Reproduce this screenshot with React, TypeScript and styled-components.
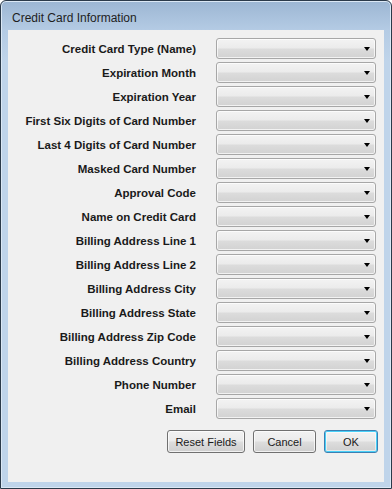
import * as React from "react";
import styled, { createGlobalStyle } from "styled-components";

const GlobalStyle = createGlobalStyle`
  html, body {
    margin: 0;
    padding: 0;
    background: #ffffff;
  }
`;

// Window frame
const Window = styled.div`
  box-sizing: border-box;
  width: 392px;
  height: 489px;
  display: flex;
  flex-direction: column;
  border: 1px solid #2b3a4a;
  border-radius: 6px 6px 0 0;
  background: linear-gradient(
    to bottom,
    #9cb6d3 0px,
    #b4cbe4 29px,
    #bfd4ea 60px,
    #bfd4ea 100%
  );
  box-shadow: inset 0 0 0 1px #dbe8f5;
  padding: 0 7px 6px 7px;
`;

const TitleBar = styled.div`
  height: 29px;
  display: flex;
  align-items: center;
  padding: 5px 0 0 4px;
  box-sizing: border-box;
  font-family: "Liberation Sans", Arial, sans-serif;
  font-size: 12px;
  color: #1e1e1e;
`;

const Client = styled.div`
  flex: 1;
  display: flex;
  flex-direction: column;
  background: #f0f0f0;
  padding: 8px 0 0 0;
`;

// Form grid
const Form = styled.div`
  display: grid;
  grid-template-columns: 188px 160px;
  column-gap: 20px;
  row-gap: 3px;
`;

const Label = styled.label`
  display: flex;
  align-items: center;
  justify-content: flex-end;
  height: 21px;
  font-family: "Liberation Sans", Arial, sans-serif;
  font-weight: bold;
  font-size: 11.5px;
  color: #1a1a1a;
  white-space: nowrap;
`;

const Select = styled.div`
  position: relative;
  box-sizing: border-box;
  height: 21px;
  border: 1px solid #a7a7a7;
  border-radius: 3px;
  background: linear-gradient(
    to bottom,
    #f3f3f3 0%,
    #ebebeb 48%,
    #dcdcdc 52%,
    #d2d2d2 100%
  );
  box-shadow: inset 0 0 0 1px rgba(255, 255, 255, 0.7);
`;

const Arrow = styled.span`
  position: absolute;
  right: 5px;
  top: 8px;
  width: 0;
  height: 0;
  border-left: 3.5px solid transparent;
  border-right: 3.5px solid transparent;
  border-top: 4px solid #000000;
`;

// Button row
const ButtonRow = styled.div`
  display: flex;
  justify-content: flex-end;
  gap: 8px;
  margin-top: 11px;
  padding-right: 6px;
`;

const Button = styled.button<{ $width: number; $default?: boolean }>`
  box-sizing: border-box;
  width: ${(p) => p.$width}px;
  height: 23px;
  padding: 0;
  border: 1px solid ${(p) => (p.$default ? "#3c7fb1" : "#707070")};
  border-radius: 3px;
  background: linear-gradient(
    to bottom,
    #f2f2f2 0%,
    #ebebeb 48%,
    #dddddd 52%,
    #cfcfcf 100%
  );
  box-shadow: ${(p) =>
    p.$default
      ? "inset 0 0 0 1px #48d0f8, inset 0 0 0 2px rgba(255,255,255,0.5)"
      : "inset 0 0 0 1px rgba(255,255,255,0.7)"};
  font-family: "Liberation Sans", Arial, sans-serif;
  font-size: 11px;
  color: #1a1a1a;
`;

const fields = [
  "Credit Card Type (Name)",
  "Expiration Month",
  "Expiration Year",
  "First Six Digits of Card Number",
  "Last 4 Digits of Card Number",
  "Masked Card Number",
  "Approval Code",
  "Name on Credit Card",
  "Billing Address Line 1",
  "Billing Address Line 2",
  "Billing Address City",
  "Billing Address State",
  "Billing Address Zip Code",
  "Billing Address Country",
  "Phone Number",
  "Email",
];

export default function App() {
  return (
    <>
      <GlobalStyle />
      <Window>
        <TitleBar>Credit Card Information</TitleBar>
        <Client>
          <Form>
            {fields.map((f) => (
              <React.Fragment key={f}>
                <Label>{f}</Label>
                <Select>
                  <Arrow />
                </Select>
              </React.Fragment>
            ))}
          </Form>
          <ButtonRow>
            <Button $width={78}>Reset Fields</Button>
            <Button $width={63}>Cancel</Button>
            <Button $width={54} $default>
              OK
            </Button>
          </ButtonRow>
        </Client>
      </Window>
    </>
  );
}
